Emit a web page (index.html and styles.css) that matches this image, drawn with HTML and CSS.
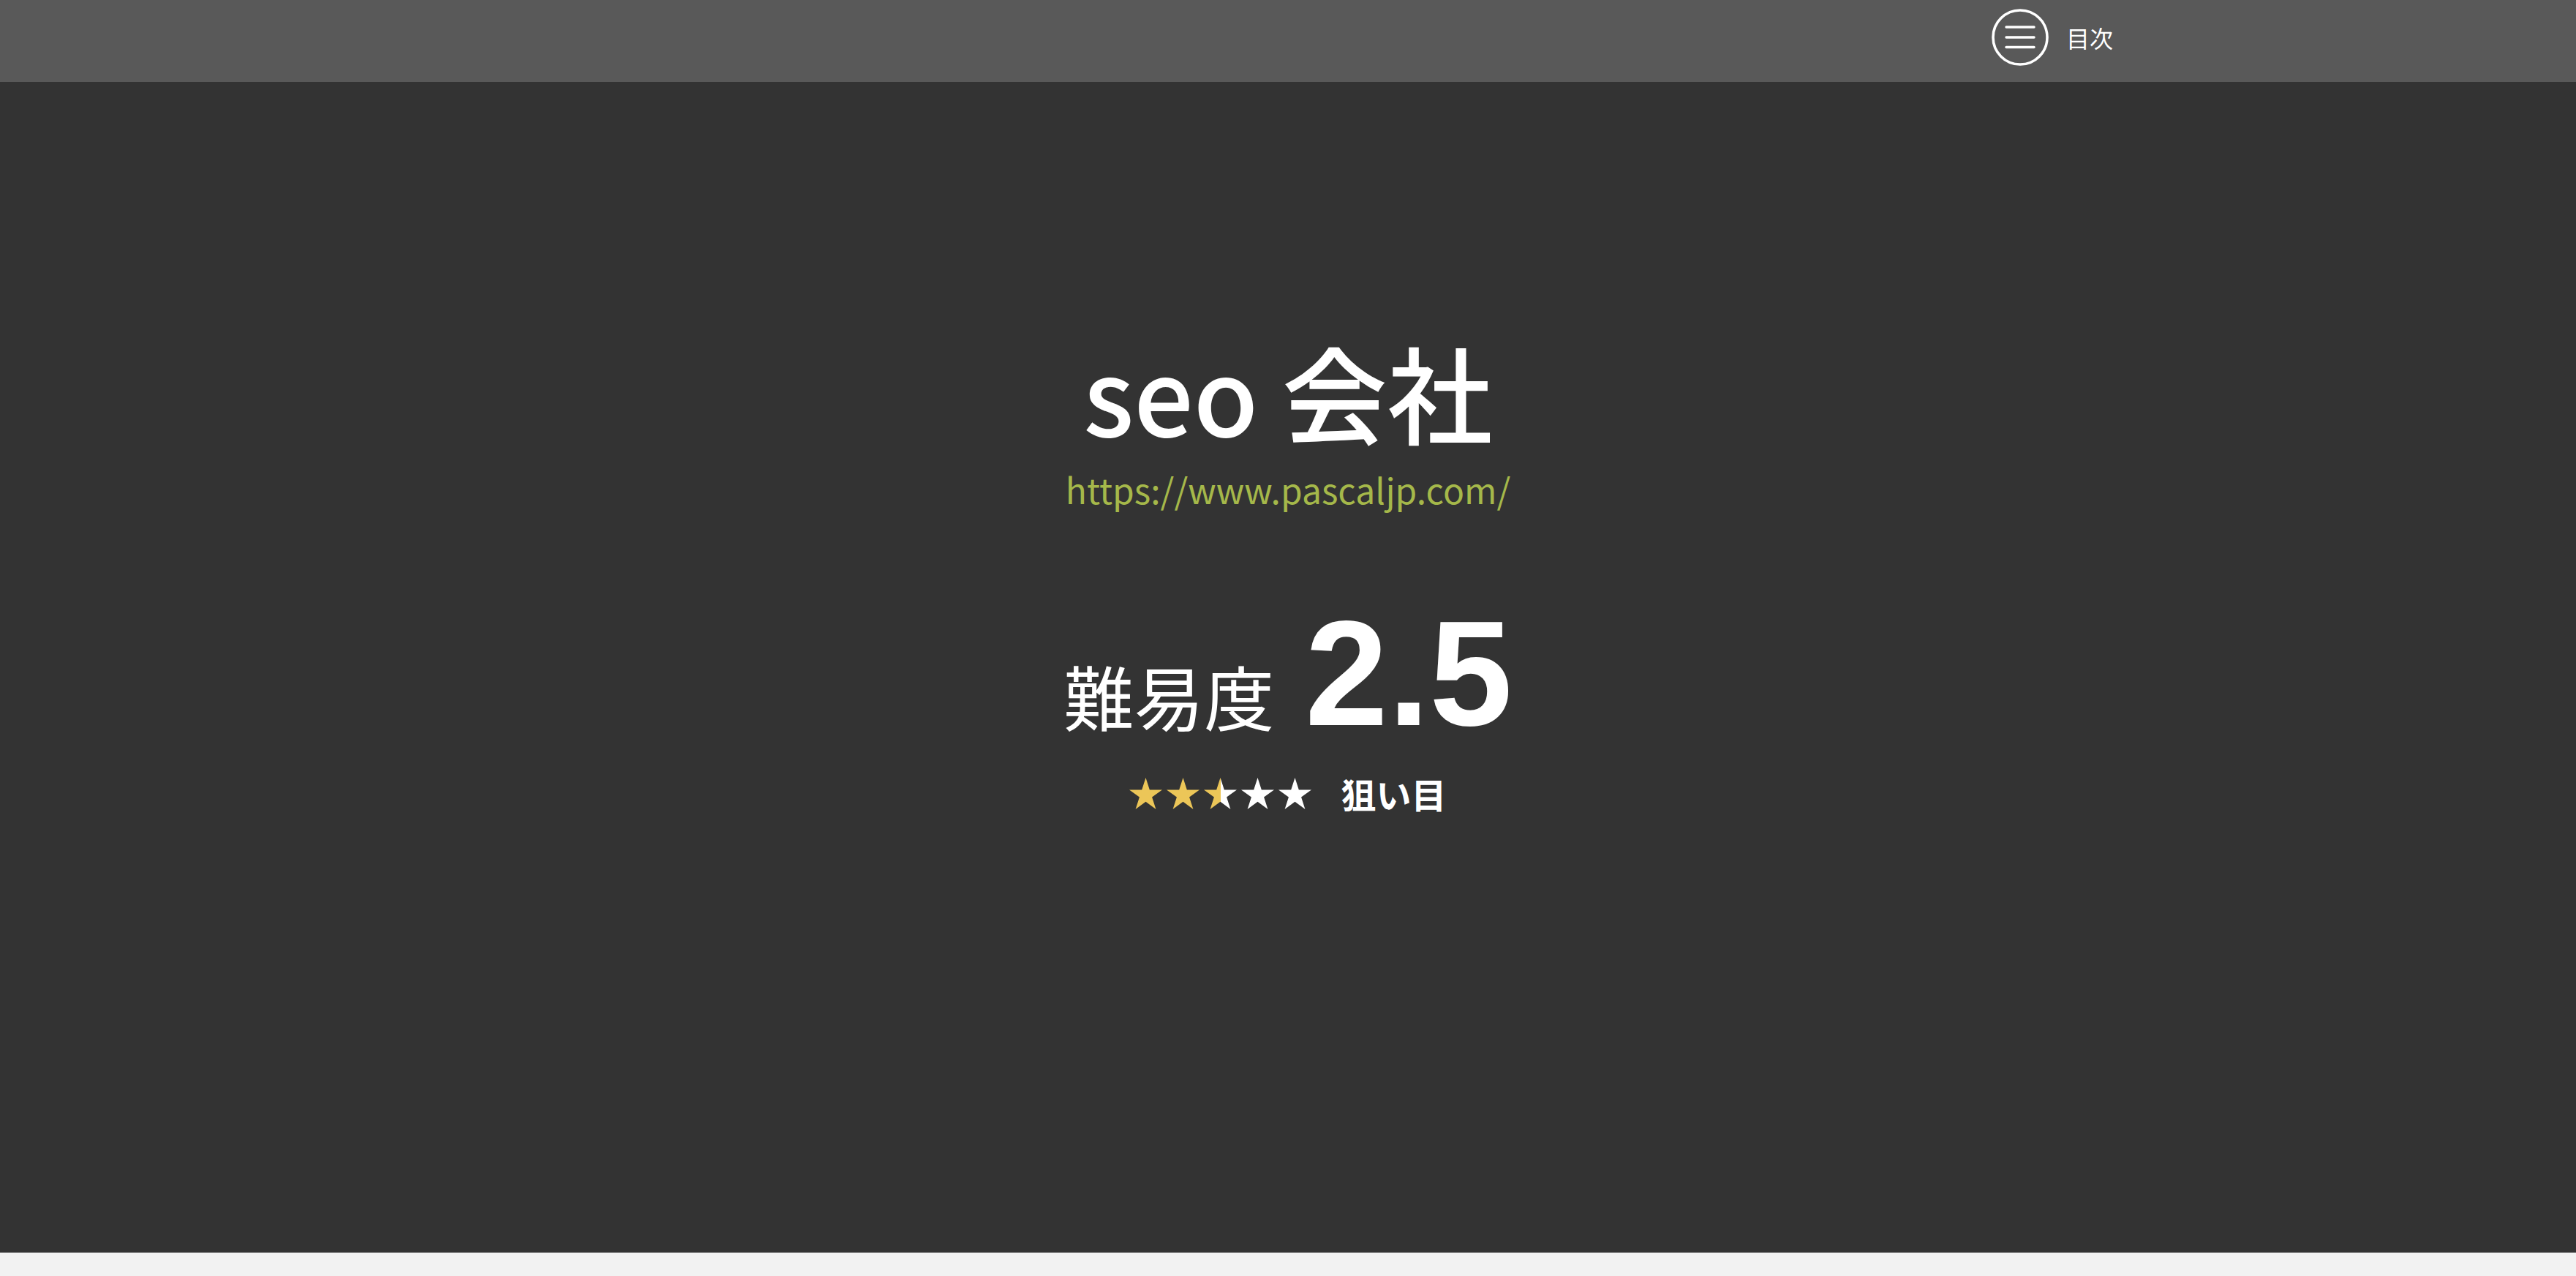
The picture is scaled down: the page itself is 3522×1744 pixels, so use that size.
FILE: index.html
```html
<!DOCTYPE html>
<html lang="ja">
<head>
<meta charset="utf-8">
<title>seo 会社</title>
<link rel="stylesheet" href="styles.css">
</head>
<body>
<header class="site-header">
  <div class="header-inner">
    <button class="toc-button" type="button">
      <svg class="toc-icon" viewBox="0 0 78 78" width="78" height="78" aria-hidden="true">
        <circle cx="39" cy="39" r="37" fill="none" stroke="#fff" stroke-width="3.6"/>
        <line x1="20" y1="25" x2="58" y2="25" stroke="#fff" stroke-width="3.4" stroke-linecap="round"/>
        <line x1="20" y1="39" x2="58" y2="39" stroke="#fff" stroke-width="3.4" stroke-linecap="round"/>
        <line x1="20" y1="52.5" x2="58" y2="52.5" stroke="#fff" stroke-width="3.4" stroke-linecap="round"/>
      </svg>
      <span class="toc-label">目次</span>
    </button>
  </div>
</header>
<main class="hero">
  <h1 class="hero-title">seo 会社</h1>
  <a class="hero-url" href="#">https://www.pascaljp.com/</a>
  <div class="difficulty">
    <span class="difficulty-label">難易度</span>
    <span class="difficulty-value">2.5</span>
  </div>
  <div class="rating">
    <div class="stars">
      <svg class="star" viewBox="2.45 0 95.1 90.45" aria-hidden="true"><polygon class="star-full" points="50,0 61.23,34.55 97.55,34.55 68.16,55.9 79.39,90.45 50,69.1 20.61,90.45 31.84,55.9 2.45,34.55 38.77,34.55"/></svg>
      <svg class="star" viewBox="2.45 0 95.1 90.45" aria-hidden="true"><polygon class="star-full" points="50,0 61.23,34.55 97.55,34.55 68.16,55.9 79.39,90.45 50,69.1 20.61,90.45 31.84,55.9 2.45,34.55 38.77,34.55"/></svg>
      <svg class="star" viewBox="2.45 0 95.1 90.45" aria-hidden="true"><defs><linearGradient id="half-star"><stop offset="50%" stop-color="#ecc658"/><stop offset="50%" stop-color="#ffffff"/></linearGradient></defs><polygon fill="url(#half-star)" points="50,0 61.23,34.55 97.55,34.55 68.16,55.9 79.39,90.45 50,69.1 20.61,90.45 31.84,55.9 2.45,34.55 38.77,34.55"/></svg>
      <svg class="star" viewBox="2.45 0 95.1 90.45" aria-hidden="true"><polygon class="star-empty" points="50,0 61.23,34.55 97.55,34.55 68.16,55.9 79.39,90.45 50,69.1 20.61,90.45 31.84,55.9 2.45,34.55 38.77,34.55"/></svg>
      <svg class="star" viewBox="2.45 0 95.1 90.45" aria-hidden="true"><polygon class="star-empty" points="50,0 61.23,34.55 97.55,34.55 68.16,55.9 79.39,90.45 50,69.1 20.61,90.45 31.84,55.9 2.45,34.55 38.77,34.55"/></svg>
    </div>
    <span class="rating-label">狙い目</span>
  </div>
</main>
</body>
</html>
```

FILE: styles.css
```css
* {
  box-sizing: border-box;
}

html, body {
  margin: 0;
  padding: 0;
}

body {
  background: #f2f2f2;
  font-family: "Noto Sans CJK JP", "Noto Sans", sans-serif;
  color: #fff;
}

.site-header {
  height: 112px;
  background: #595959;
}

.header-inner {
  max-width: 2256px;
  margin: 0 auto;
  display: flex;
  justify-content: flex-end;
  padding-top: 12px;
}

.toc-button {
  display: flex;
  align-items: center;
  gap: 24px;
  background: none;
  border: 0;
  padding: 0;
  color: #fff;
  font-family: inherit;
  cursor: pointer;
}

.toc-icon {
  display: block;
  width: 78px;
  height: 78px;
}

.toc-label {
  font-size: 32px;
  line-height: 32px;
  font-weight: 400;
}

.hero {
  height: 1600px;
  background: #333333;
  display: flex;
  flex-direction: column;
  align-items: center;
  padding-top: 350px;
}

.hero-title {
  margin: 0;
  font-size: 144px;
  line-height: 144px;
  font-weight: 500;
  color: #fff;
}

.hero-url {
  margin-top: 26px;
  font-size: 48px;
  line-height: 72px;
  color: #a5b84a;
  text-decoration: none;
}

.difficulty {
  margin-top: 114px;
  display: flex;
  align-items: baseline;
  gap: 42px;
}

.difficulty-label {
  font-size: 96px;
  line-height: 1;
  font-weight: 400;
}

.difficulty-value {
  font-family: "Liberation Sans", Arial, sans-serif;
  font-weight: 700;
  font-size: 204px;
  line-height: 1;
}

.rating {
  margin-top: 36px;
  height: 52px;
  display: flex;
  align-items: center;
  gap: 40px;
}

.stars {
  display: flex;
  gap: 6px;
}

.star {
  display: block;
  width: 45px;
  height: 43px;
}

.star-full {
  fill: #ecc658;
}

.star-empty {
  fill: #ffffff;
}

.rating-label {
  font-size: 48px;
  line-height: 1;
  font-weight: 700;
}
```
